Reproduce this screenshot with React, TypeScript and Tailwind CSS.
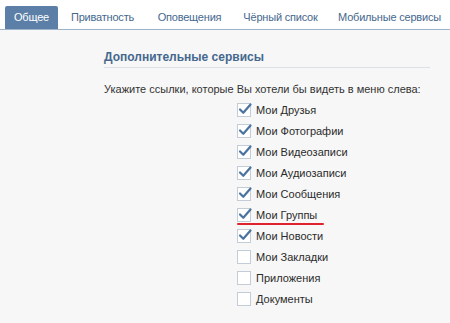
import { useState } from "react"

type Item = { label: string; checked: boolean; marked?: boolean }

const tabs = [
  { label: "Общее", width: "w-[53px]" },
  { label: "Приватность", width: "w-[89px]" },
  { label: "Оповещения", width: "w-[85px]" },
  { label: "Чёрный список", width: "w-[97px]" },
  { label: "Мобильные сервисы", width: "w-[121px]" },
]

const initialItems: Item[] = [
  { label: "Мои Друзья", checked: true },
  { label: "Мои Фотографии", checked: true },
  { label: "Мои Видеозаписи", checked: true },
  { label: "Мои Аудиозаписи", checked: true },
  { label: "Мои Сообщения", checked: true },
  { label: "Мои Группы", checked: true, marked: true },
  { label: "Мои Новости", checked: true },
  { label: "Мои Закладки", checked: false },
  { label: "Приложения", checked: false },
  { label: "Документы", checked: false },
]

const CheckBox = ({ checked }: { checked: boolean }) => (
  <span className="relative block h-[14px] w-[14px] shrink-0 border border-[#c3cdd8] bg-white">
    {checked && (
      <svg className="absolute -left-[1px] -top-[3px]" width="16" height="16" viewBox="0 0 16 16">
        <path d="M3 8.5 L6.3 11.8 L13.5 3.5" fill="none" stroke="#4a73a0" strokeWidth="2.2" strokeLinecap="round" strokeLinejoin="round" />
      </svg>
    )}
  </span>
)

export default function App() {
  const [active, setActive] = useState(0)
  const [items, setItems] = useState(initialItems)

  const toggle = (index: number) =>
    setItems((prev) => prev.map((item, i) => (i === index ? { ...item, checked: !item.checked } : item)))

  return (
    <div className="h-[323px] w-[450px] overflow-hidden bg-[#f7f7f7] text-[11px] font-['Liberation_Sans',Arial,sans-serif]">
      <div className="flex h-[30px] items-end border-b border-[#9fb2c7] bg-white pl-[5px]">
        {tabs.map((tab, index) => (
          <button
            key={tab.label}
            onClick={() => setActive(index)}
            className={`h-[23px] shrink-0 whitespace-nowrap text-center tracking-[-0.2px] ${tab.width} ${
              index === active ? "rounded-t-[2px] bg-[#5b7fa6] text-white" : "text-[#45688e]"
            }`}
          >
            {tab.label}
          </button>
        ))}
      </div>

      <div className="pl-[104px] pr-[20px] pt-[18px]">
        <div className="border-b border-[#dae1e8] pb-[1px] text-[12px] font-bold text-[#45688e]">
          Дополнительные сервисы
        </div>
        <div className="mt-[13px] text-[#333]">Укажите ссылки, которые Вы хотели бы видеть в меню слева:</div>

        <div className="mt-[2px] flex flex-col pl-[133px]">
          {items.map((item, index) => (
            <label key={item.label} className="relative flex h-[21px] cursor-pointer items-center gap-[5px] text-[#2b2b2b]">
              <span onClick={() => toggle(index)}>
                <CheckBox checked={item.checked} />
              </span>
              <span>{item.label}</span>
              {item.marked && (
                <span className="absolute left-0 top-[18px] h-[2px] w-[87px] rounded-full bg-[#e0222c]" />
              )}
            </label>
          ))}
        </div>
      </div>
    </div>
  )
}
